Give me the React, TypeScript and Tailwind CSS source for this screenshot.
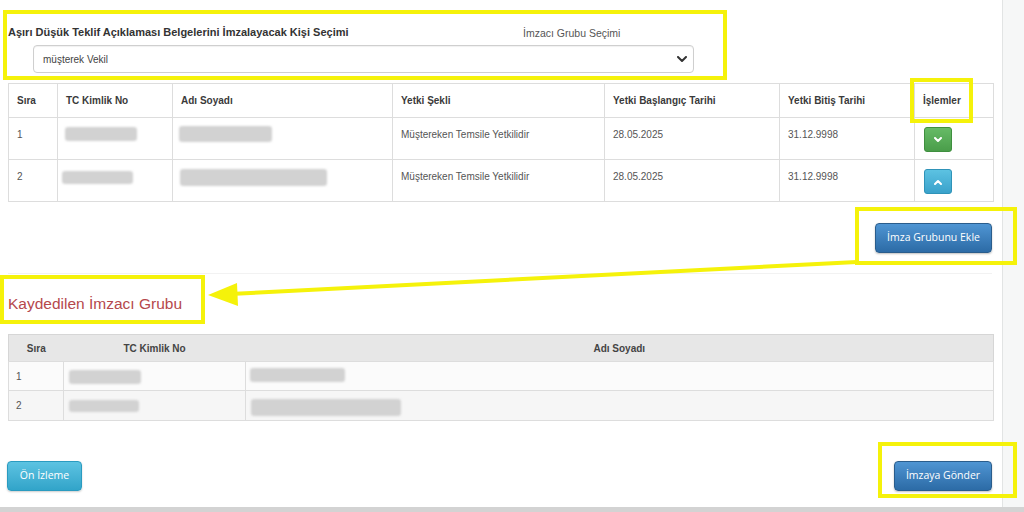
import React from "react";

const BLUE_BTN =
  "h-[30px] rounded-[4px] border border-[#2a5d8c] bg-gradient-to-b from-[#4f95d3] to-[#2c6ba6] px-[10px] text-[10.5px] text-white shadow-[0_1px_2px_rgba(0,0,0,0.25)] font-['Open_Sans',sans-serif]";

function Blur({ w, h, ml, mt }: { w: number; h: number; ml: number; mt: number }) {
  return (
    <div
      className="rounded-[3px] bg-[#d2d2d2] blur-[1px]"
      style={{ width: w, height: h, marginLeft: ml, marginTop: mt }}
    />
  );
}

function Chevron({ up }: { up?: boolean }) {
  return (
    <svg width="8" height="6" viewBox="0 0 8 6" className="mx-auto">
      <path
        d={up ? "M1 5 L4 2 L7 5" : "M1 1 L4 4 L7 1"}
        fill="none"
        stroke="white"
        strokeWidth="2"
        strokeLinecap="round"
        strokeLinejoin="round"
      />
    </svg>
  );
}

const signers = [
  { sira: 1, tc: [72, 14, 7, 9], ad: [93, 16, 6, 8], up: false },
  { sira: 2, tc: [71, 13, 4, 11], ad: [147, 17, 7, 9], up: true },
];

const saved = [
  { sira: 1, tc: [72, 14, 5, 8], ad: [95, 14, 4, 6] },
  { sira: 2, tc: [70, 12, 5, 9], ad: [150, 17, 5, 8] },
];

export default function App() {
  return (
    <div className="relative h-[512px] w-[1024px] overflow-hidden bg-white font-['Liberation_Sans',Arial,sans-serif] text-[10px] text-[#555]">
      <div className="flex h-[507px]">
        <main className="w-[1003px] border-r border-[#e2e4e4] pl-2 pr-[10px] pt-[25px]">
          {/* signer selection */}
          <div className="flex h-[14px] items-center">
            <div className="w-[515px] text-[11px] font-bold text-[#333]">
              Aşırı Düşük Teklif Açıklaması Belgelerini İmzalayacak Kişi Seçimi
            </div>
            <div className="mt-[4px] text-[10.5px] text-[#555]">İmzacı Grubu Seçimi</div>
          </div>
          <div className="ml-[25px] mt-[6px] flex h-[28px] w-[661px] items-center justify-between rounded-[4px] border border-[#cfcfcf] bg-white pl-[9px] pr-[6px] shadow-[inset_0_1px_1px_rgba(0,0,0,0.06)]">
            <span className="text-[#444]">müşterek Vekil</span>
            <svg width="10" height="7" viewBox="0 0 10 7">
              <path d="M1 1 L5 5 L9 1" fill="none" stroke="#333" strokeWidth="2" strokeLinecap="round" strokeLinejoin="round" />
            </svg>
          </div>

          {/* signer table */}
          <table className="mt-[10px] w-[985px] table-fixed border-collapse border border-[#dddddd]">
            <colgroup>
              <col className="w-[49px]" />
              <col className="w-[115px]" />
              <col className="w-[220px]" />
              <col className="w-[212px]" />
              <col className="w-[175px]" />
              <col className="w-[135px]" />
              <col className="w-[79px]" />
            </colgroup>
            <thead>
              <tr className="h-[34px] text-left font-bold text-[#3a3a3a]">
                {["Sıra", "TC Kimlik No", "Adı Soyadı", "Yetki Şekli", "Yetki Başlangıç Tarihi", "Yetki Bitiş Tarihi", "İşlemler"].map((h) => (
                  <th key={h} className="border border-[#dddddd] pl-2 align-middle">
                    {h}
                  </th>
                ))}
              </tr>
            </thead>
            <tbody>
              {signers.map((r) => (
                <tr key={r.sira} className="h-[42px]">
                  <td className="border border-[#dddddd] pl-2 pt-[10px] align-top leading-[14px]">{r.sira}</td>
                  <td className="border border-[#dddddd] align-top">
                    <Blur w={r.tc[0]} h={r.tc[1]} ml={r.tc[2]} mt={r.tc[3]} />
                  </td>
                  <td className="border border-[#dddddd] align-top">
                    <Blur w={r.ad[0]} h={r.ad[1]} ml={r.ad[2]} mt={r.ad[3]} />
                  </td>
                  <td className="border border-[#dddddd] pl-2 pt-[10px] align-top leading-[14px]">Müştereken Temsile Yetkilidir</td>
                  <td className="border border-[#dddddd] pl-2 pt-[10px] align-top leading-[14px]">28.05.2025</td>
                  <td className="border border-[#dddddd] pl-2 pt-[10px] align-top leading-[14px]">31.12.9998</td>
                  <td className="border border-[#dddddd] pl-[9px] pt-[9px] align-top">
                    <div
                      className={
                        r.up
                          ? "flex h-[25px] w-[28px] items-center rounded-[3px] border border-[#2f93b8] bg-gradient-to-b from-[#5cc2e2] to-[#3aa2cb]"
                          : "flex h-[25px] w-[28px] items-center rounded-[3px] border border-[#3f8f3f] bg-gradient-to-b from-[#66bb66] to-[#4a9d4a]"
                      }
                    >
                      <Chevron up={r.up} />
                    </div>
                  </td>
                </tr>
              ))}
            </tbody>
          </table>

          <div className="mt-[21px] flex justify-end">
            <button className={BLUE_BTN + " w-[117px]"}>İmza Grubunu Ekle</button>
          </div>

          <div className="mt-[20px] border-t border-[#f2f2f2]" />

          <h2 className="mt-[20px] h-[20px] text-[15.5px] leading-[20px] text-[#b5484c]">Kaydedilen İmzacı Grubu</h2>

          {/* saved group table */}
          <table className="mt-[20px] w-[985px] table-fixed border-collapse border border-[#d6d6d6]">
            <colgroup>
              <col className="w-[55px]" />
              <col className="w-[182px]" />
              <col className="w-[748px]" />
            </colgroup>
            <thead>
              <tr className="h-[27px] bg-[#e7e7e7] text-center font-bold text-[#444]">
                <th>Sıra</th>
                <th>TC Kimlik No</th>
                <th>Adı Soyadı</th>
              </tr>
            </thead>
            <tbody>
              {saved.map((r, i) => (
                <tr key={r.sira} className={i === 0 ? "h-[29px] bg-[#fbfbfb]" : "h-[30px] bg-[#f6f6f6]"}>
                  <td className="border border-[#dddddd] pl-[7px] align-middle">{r.sira}</td>
                  <td className="border border-[#dddddd] align-top">
                    <Blur w={r.tc[0]} h={r.tc[1]} ml={r.tc[2]} mt={r.tc[3]} />
                  </td>
                  <td className="border border-[#dddddd] align-top">
                    <Blur w={r.ad[0]} h={r.ad[1]} ml={r.ad[2]} mt={r.ad[3]} />
                  </td>
                </tr>
              ))}
            </tbody>
          </table>

          <div className="mt-[40px] flex items-center justify-between">
            <button className="-ml-px h-[30px] w-[75px] rounded-[4px] border border-[#2a9bc0] bg-gradient-to-b from-[#5cc3e2] to-[#31a4c9] text-[10.5px] text-white shadow-[0_1px_2px_rgba(0,0,0,0.2)] font-['Open_Sans',sans-serif]">
              Ön İzleme
            </button>
            <button className={BLUE_BTN + " w-[98px]"}>İmzaya Gönder</button>
          </div>
        </main>
        <div className="flex-1 bg-[#f6f7f7]" />
      </div>
      <div className="h-[5px] bg-[#d3d3d3]" />

      {/* yellow annotation overlays */}
      <div className="pointer-events-none absolute left-[3px] top-[10px] h-[70px] w-[724px] border-4 border-[#f5f20a]" />
      <div className="pointer-events-none absolute left-[910px] top-[78px] h-[45px] w-[63px] border-4 border-[#f5f20a]" />
      <div className="pointer-events-none absolute left-[855px] top-[207px] h-[58px] w-[162px] border-4 border-[#f5f20a]" />
      <div className="pointer-events-none absolute left-0 top-[275px] h-[49px] w-[205px] border-4 border-[#f5f20a]" />
      <div className="pointer-events-none absolute left-[878px] top-[442px] h-[56px] w-[139px] border-4 border-[#f5f20a]" />
      <svg className="pointer-events-none absolute left-0 top-0" width="1024" height="512">
        <line x1="857" y1="262" x2="230" y2="294" stroke="#f5f20a" strokeWidth="4" />
        <polygon points="208,295 237,283 238,306" fill="#f5f20a" />
      </svg>
    </div>
  );
}
